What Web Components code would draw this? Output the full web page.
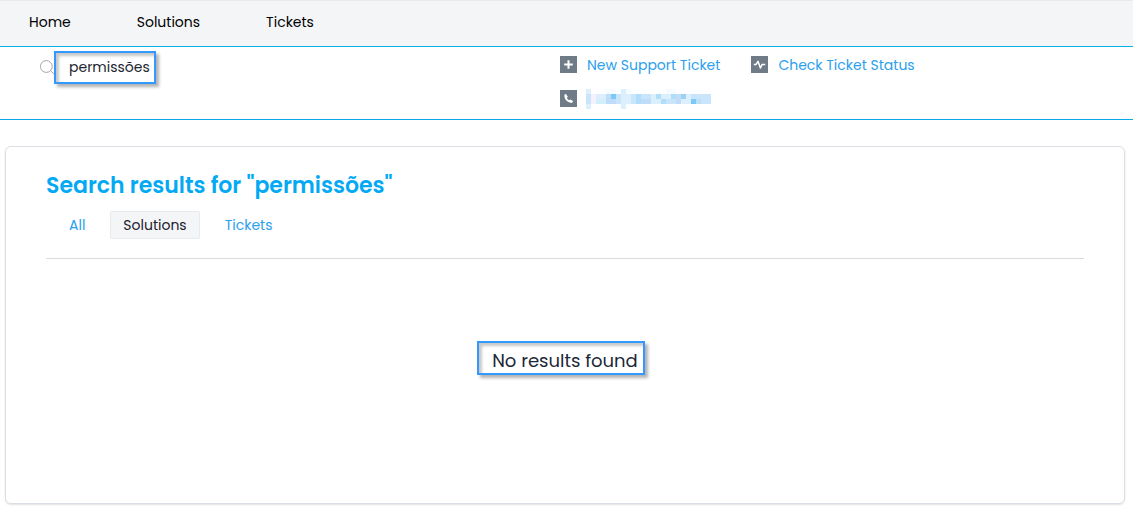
<!DOCTYPE html>
<html lang="en">
<head>
<meta charset="utf-8">
<meta name="viewport" content="width=device-width, initial-scale=1">
<title>Search results</title>
<style>
  body {
    margin: 0;
    background: #fff;
    color: #1b2838;
    font-family: Poppins, Inter, "Open Sans", sans-serif;
    font-size: 14px;
    line-height: 20px;
    --accent: #04a9f4;
    --link: #2ba0ec;
    --mark: #3399ff;
    --panel: #f3f5f7;
  }
</style>
</head>
<body>
<support-portal></support-portal>

<script>
const define = (name, html, setup) => {
  const template = document.createElement('template');
  template.innerHTML = html;
  customElements.define(name, class extends HTMLElement {
    constructor() {
      super();
      this.attachShadow({ mode: 'open' }).append(template.content.cloneNode(true));
    }
    connectedCallback() {
      if (setup) setup(this, this.shadowRoot);
    }
  });
};

/* Framed highlight with a drop shadow round its content */
define('highlight-box', `
<style>
  :host {
    display: block;
    box-sizing: border-box;
    border: 2px solid var(--mark);
    box-shadow: 3px 3px 3px rgba(0,0,0,.3), inset 3px 3px 3px rgba(0,0,0,.22);
  }
</style>
<slot></slot>`);

define('nav-bar', `
<style>
  :host { display: block; background: var(--panel); border-top: 1px solid #e9eaed; border-bottom: 1px solid #06b0e8; }
  nav { display: flex; gap: 66px; padding: 11px 29px 14px; }
  ::slotted(a) { color: #000; text-decoration: none; }
</style>
<nav aria-label="Main"><slot></slot></nav>`);

define('search-box', `
<style>
  :host { display: block; }
  label { display: flex; align-items: center; }
  svg { width: 16px; height: 16px; flex: none; margin-right: -2px; }
  highlight-box { width: 102px; height: 33px; padding: 3px 4px 4px 13px; }
  input { display: block; box-sizing: border-box; width: 100%; height: 22px; padding: 0; border: 0; outline: 0; background: none; color: #23262f; font: inherit; }
</style>
<label>
  <svg viewBox="0 0 16 16" fill="none" stroke="#a6a6a6" stroke-width="1" aria-hidden="true"><circle cx="6.3" cy="6.5" r="5.9"/><path d="M10.6 10.8L15 15"/></svg>
  <highlight-box><input type="text" aria-label="Search"></highlight-box>
</label>`, (host, root) => { root.querySelector('input').value = host.getAttribute('value'); });

const icons = {
  plus: '<path d="M8.5 4.2V12.8M4.2 8.5H12.8" stroke="#fff" stroke-width="2"/>',
  pulse: '<path d="M2.8 8.6H5L7 5.3L9.4 12L11.2 8.4H14.2" fill="none" stroke="#fff" stroke-width="1.5" stroke-linejoin="round"/>',
  phone: '<path d="M4.4 5.1C4.7 4.4 5.3 4 6 4L7.8 6.7L6.9 8C7.3 9 8 9.8 9.1 10.3L10.4 9.4L13 11C12.9 12 12.3 12.8 11.3 12.9C7.4 12.8 4 9 4.4 5.1Z" fill="#fff"/>'
};

define('icon-link', `
<style>
  :host { display: block; }
  a { display: inline-flex; align-items: center; gap: 10px; color: var(--link); text-decoration: none; white-space: nowrap; }
  svg { width: 17px; height: 17px; flex: none; background: #6f7c87; }
</style>
<a href="#"><svg viewBox="0 0 17 17" aria-hidden="true"></svg><slot></slot></a>`,
(host, root) => {
  root.querySelector('svg').innerHTML = icons[host.getAttribute('icon')];
  if (host.title) root.querySelector('a').setAttribute('aria-label', host.title);
});

/* Phone number shown as a censored mosaic of 5px cells */
define('masked-number', `
<style>
  :host { display: block; margin-left: -1px; }
  svg { display: block; width: 125px; height: 20px; }
</style>
<svg viewBox="0 0 25 4" shape-rendering="crispEdges" aria-hidden="true"></svg>`,
(host, root) => {
  const tones = { a: '#fdfeff', b: '#f5fbff', c: '#dceffc', d: '#c8e5fb', e: '#b0def9', f: '#79cbf6', g: '#9dcff7', h: '#f6f2fd', i: '#d2f0fb', j: '#bfddf9' };
  const rows = [
    'c.aabbacbaaa..aabbaaaaaaa',
    'dhccjfdccdeddceccejgcdddd',
    'dhiijjdccdejjcceddjccfjdd',
    'c......ca................'
  ];
  root.querySelector('svg').innerHTML = rows.map((row, y) => [...row].map((t, x) =>
    t === '.' ? '' : `<rect x="${x}" y="${y}" width="1" height="1" fill="${tones[t]}"/>`).join('')).join('');
});

define('help-bar', `
<style>
  :host { display: grid; grid-template-columns: minmax(0, 520fr) minmax(0, 533fr); align-items: start; padding: 4px 40px 8px; border-bottom: 1px solid #06a9e8; }
  .links { display: flex; flex-wrap: wrap; gap: 9px 31px; padding-top: 1px; }
  .links > * { display: flex; align-items: center; min-height: 25px; }
  .phone { flex-basis: 100%; }
</style>
<search-box value="permissões"></search-box>
<div class="links">
  <icon-link icon="plus">New Support Ticket</icon-link>
  <icon-link icon="pulse">Check Ticket Status</icon-link>
  <icon-link class="phone" icon="phone" title="Phone"><masked-number></masked-number></icon-link>
</div>`);

define('result-tabs', `
<style>
  :host { display: block; border-bottom: 1px solid #d9dcde; padding-bottom: 19px; }
  nav { display: flex; gap: 12px; padding-left: 10px; }
  a { padding: 3px 12px; border: 1px solid transparent; border-radius: 2px; color: var(--link); text-decoration: none; }
  a[aria-current] { background: var(--panel); border-color: #e8ebee; color: #1d2030; }
</style>
<nav aria-label="Result type">
  <a href="#">All</a><a href="#" aria-current="page">Solutions</a><a href="#">Tickets</a>
</nav>`);

define('result-card', `
<style>
  :host { display: block; box-sizing: border-box; margin: 26px 8px 8px 5px; padding: 24px 40px 128px; border: 1px solid #d9dfe4; border-radius: 6px; box-shadow: 0 1px 2px rgba(0,0,0,.12); }
  h1 { margin: 0 0 10px; color: var(--accent); font-size: 22px; line-height: 30px; font-weight: 600; }
  .empty { display: flex; justify-content: center; padding: 82px 8px 0 0; }
  highlight-box { padding: 6px 5px 0 13px; }
  p { margin: 0; font-size: 18px; line-height: 24px; }
</style>
<h1>Search results for "permissões"</h1>
<result-tabs></result-tabs>
<div class="empty"><highlight-box><p>No results found</p></highlight-box></div>`);

define('support-portal', `
<style>:host { display: block; }</style>
<nav-bar><a href="#">Home</a><a href="#">Solutions</a><a href="#">Tickets</a></nav-bar>
<help-bar></help-bar>
<main><result-card></result-card></main>`);
</script>
</body>
</html>
